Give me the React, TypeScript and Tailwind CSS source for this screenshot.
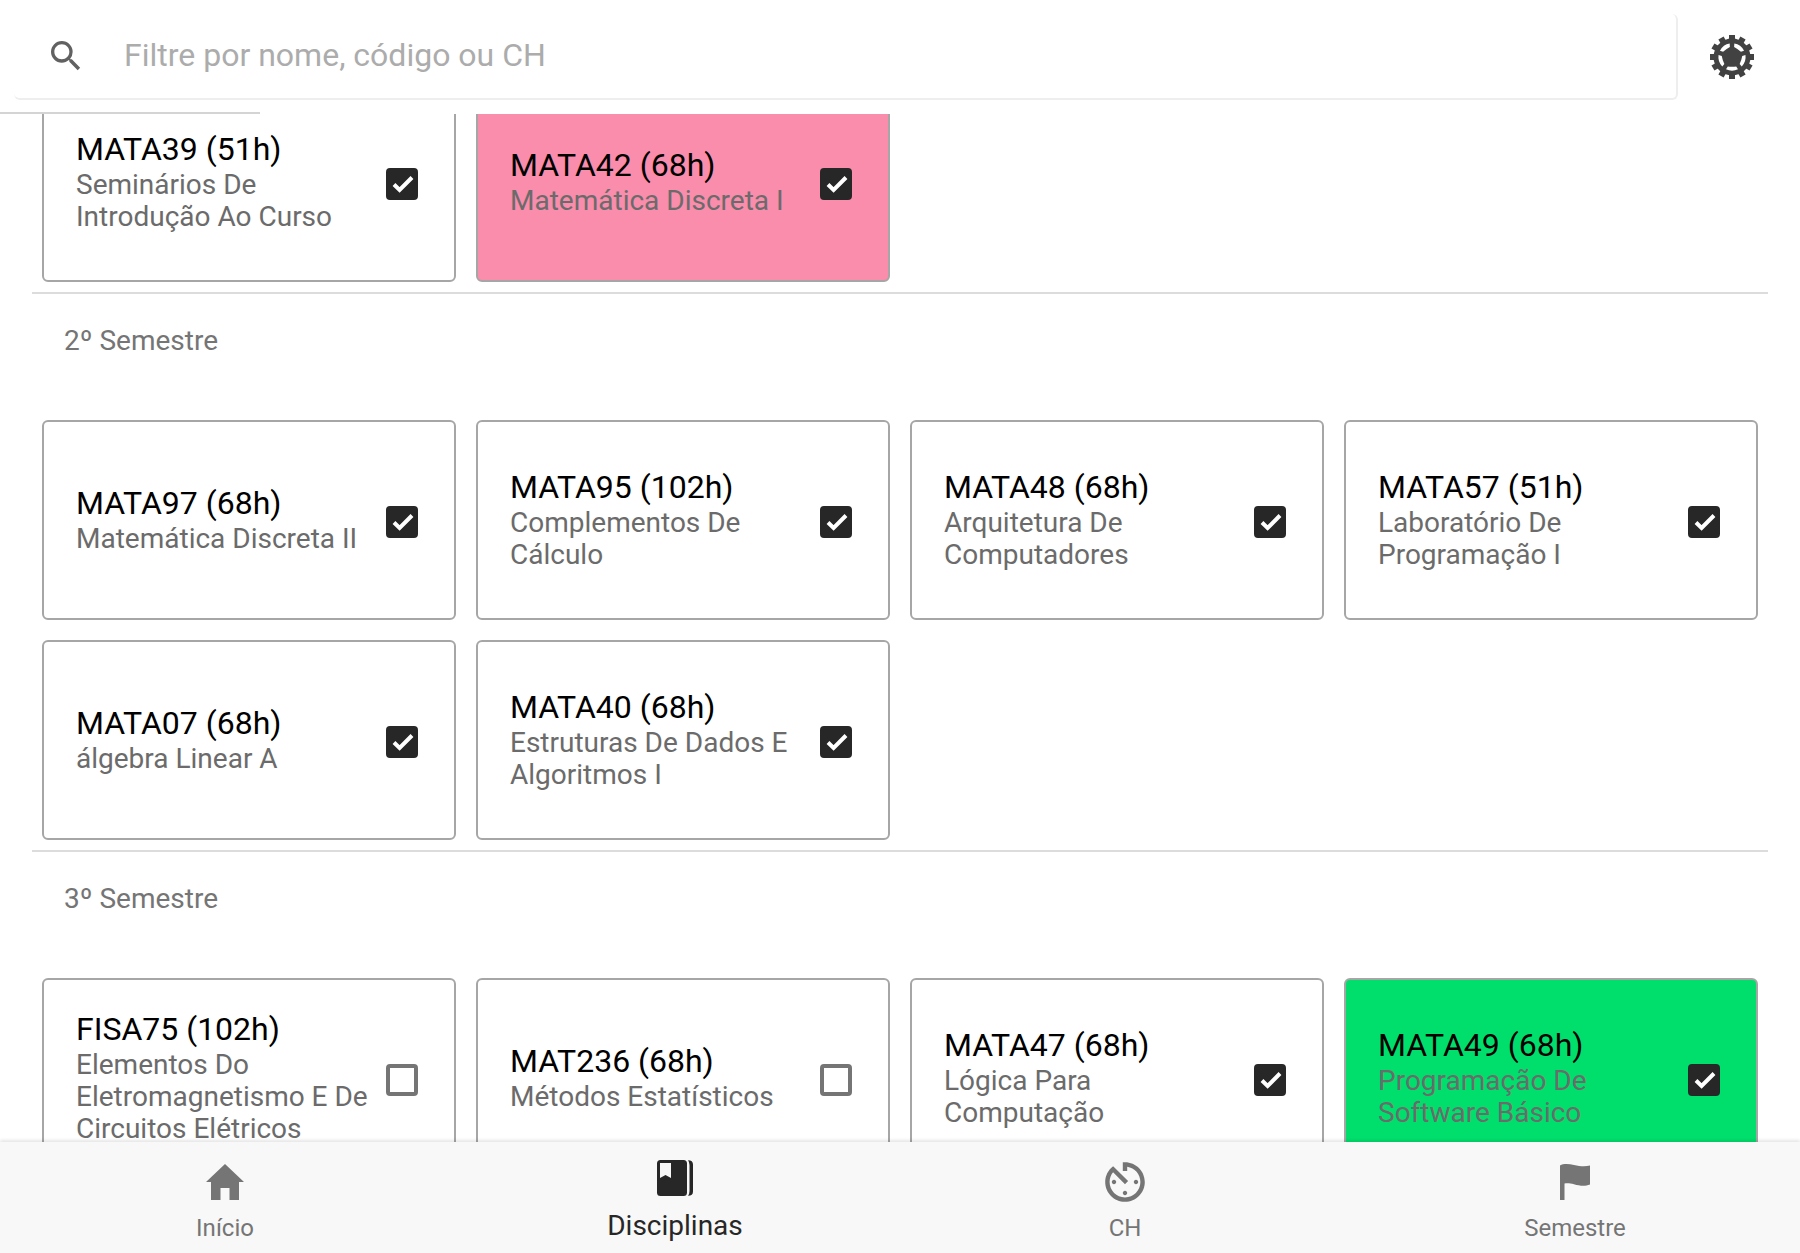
import { MdSearch } from "react-icons/md";

type Course = { code: string; name: string; done: boolean; tone?: "pink" | "green" };

const first: Course[] = [
  { code: "MATA39 (51h)", name: "Seminários De Introdução Ao Curso", done: true },
  { code: "MATA42 (68h)", name: "Matemática Discreta I", done: true, tone: "pink" },
];
const second: Course[] = [
  { code: "MATA97 (68h)", name: "Matemática Discreta II", done: true },
  { code: "MATA95 (102h)", name: "Complementos De Cálculo", done: true },
  { code: "MATA48 (68h)", name: "Arquitetura De Computadores", done: true },
  { code: "MATA57 (51h)", name: "Laboratório De Programação I", done: true },
  { code: "MATA07 (68h)", name: "álgebra Linear A", done: true },
  { code: "MATA40 (68h)", name: "Estruturas De Dados E Algoritmos I", done: true },
];
const third: Course[] = [
  { code: "FISA75 (102h)", name: "Elementos Do Eletromagnetismo E De Circuitos Elétricos", done: false },
  { code: "MAT236 (68h)", name: "Métodos Estatísticos", done: false },
  { code: "MATA47 (68h)", name: "Lógica Para Computação", done: true },
  { code: "MATA49 (68h)", name: "Programação De Software Básico", done: true, tone: "green" },
];

const tones = { pink: "bg-[#fa8cac]", green: "bg-[#00df6c]", none: "bg-white" };

function CourseCard({ course }: { course: Course }) {
  return (
    <label
      className={`flex h-[200px] items-center rounded-md border-2 border-[#a6a6a6] pt-1 pr-9 pl-8 ${tones[course.tone ?? "none"]}`}
    >
      <span className="min-w-0 flex-1 pb-1.5">
        <span className="mb-px block text-[32px] leading-[38px] text-black">{course.code}</span>
        <span className="block text-[28px] leading-8 text-[#6b6b6b]">{course.name}</span>
      </span>
      <span className="relative ml-4 size-8 shrink-0">
        <input
          type="checkbox"
          defaultChecked={course.done}
          className="peer block size-8 appearance-none rounded border-4 border-[#757575] checked:border-[#272727] checked:bg-[#272727]"
        />
        <svg
          viewBox="0 0 32 32"
          className="pointer-events-none absolute inset-0 hidden size-8 peer-checked:block"
          fill="none"
          stroke="#fff"
          strokeWidth="4"
          aria-hidden="true"
        >
          <path d="M8 16.500l5.600 5.500L26 9.500" />
        </svg>
      </span>
    </label>
  );
}

function Semester({ title, courses }: { title?: string; courses: Course[] }) {
  return (
    <section className="mx-8 border-b-2 border-[#dcdcdc] px-2.5 pb-2.5">
      {title && <h2 className="h-[126px] px-[22px] pt-[31px] text-[28px] leading-8 text-[#757575]">{title}</h2>}
      <div className="grid grid-cols-4 gap-5">
        {courses.map((c) => (
          <CourseCard key={c.code} course={c} />
        ))}
      </div>
    </section>
  );
}

function GearIcon() {
  return (
    <svg viewBox="-22 -22 44 44" className="size-11" aria-hidden="true">
      {Array.from({ length: 12 }, (_, i) => (
        <rect key={i} x="-3" y="-22" width="6" height="6" fill="#424242" transform={`rotate(${i * 30})`} />
      ))}
      <circle r="18.5" fill="#424242" />
      {Array.from({ length: 5 }, (_, i) => (
        <path
          key={i}
          fill="#fff"
          d="M-6 12.200A13.600 13.600 0 0 0 6 12.200L4.200 9.400Q0 10 -4.200 9.400Z"
          transform={`rotate(${i * 72})`}
        />
      ))}
    </svg>
  );
}

function HomeIcon() {
  return (
    <svg viewBox="0 0 48 48" className="size-12" fill="currentColor" aria-hidden="true">
      <path d="M24 6L5 24H10V42H19.500V30H28.500V42H38V24H43Z" />
    </svg>
  );
}

function TimerIcon() {
  return (
    <svg viewBox="1.090 1.090 21.820 21.820" className="size-12" fill="currentColor" aria-hidden="true">
      <path d="M11 17c0 .55.45 1 1 1s1-.45 1-1-.45-1-1-1-1 .45-1 1zm0-14v4h2V5.080c3.390.49 6 3.390 6 6.920 0 3.870-3.130 7-7 7s-7-3.130-7-7c0-1.680.59-3.220 1.580-4.420L12 13l1.410-1.410-6.800-6.800v.02C4.420 6.450 3 9.050 3 12c0 4.970 4.020 9 9 9 4.970 0 9-4.030 9-9s-4.030-9-9-9h-1zm7 9c0-.55-.45-1-1-1s-1 .45-1 1 .45 1 1 1 1-.45 1-1zM6 12c0 .55.45 1 1 1s1-.45 1-1-.45-1-1-1-1 .45-1 1z" />
    </svg>
  );
}

function FlagIcon() {
  return (
    <svg viewBox="0 0 48 48" className="size-12" fill="currentColor" aria-hidden="true">
      <path d="M9 7.500C12 5.800 17 5.600 23 7C29 8.300 34 8.900 39 7.500V26.500C34 28.600 29 28 23 26.300C19 25.100 16 24.900 13.500 25.500V42H9Z" />
    </svg>
  );
}

function BookIcon() {
  return (
    <svg viewBox="0 0 36 36" className="size-9" aria-hidden="true">
      <path
        fill="#272727"
        fillRule="evenodd"
        d="M3.500 0H26.500a3.500 3.500 0 0 1 3.500 3.500V32.500a3.500 3.500 0 0 1-3.500 3.500H3.500a3.500 3.500 0 0 1-3.500-3.500V3.500A3.500 3.500 0 0 1 3.500 0ZM3 3V18L8.500 15L14 18V3Z"
      />
      <path fill="#272727" d="M31 0.200Q36 0.200 36 4.500V31.500Q36 35.800 31 35.800Q32.500 34 32.500 31V5Q32.500 2 31 0.200Z" />
    </svg>
  );
}

export default function App() {
  return (
    <div className="flex h-screen flex-col overflow-hidden bg-white font-['Roboto',sans-serif] text-[#757575]">
      <header className="relative flex h-[114px] shrink-0 items-start pt-3.5 pl-3.5">
        <label className="flex h-[86px] flex-1 items-center gap-[38px] rounded-md border-r-2 border-b-2 border-[#eeeeee] pl-8">
          <MdSearch className="size-10 shrink-0 text-[#616161]" aria-hidden="true" />
          <input
            type="text"
            aria-label="Filtrar disciplinas"
            placeholder="Filtre por nome, código ou CH"
            className="w-full bg-transparent pb-0.5 text-[32px] leading-10 text-black outline-none placeholder:text-[#acacac]"
          />
        </label>
        <button type="button" aria-label="Configurações" className="flex h-[86px] w-[122px] items-center justify-center pr-3.5">
          <GearIcon />
        </button>
        <span className="absolute bottom-0 left-0 h-0.5 w-[260px] bg-[#d4d4d4]" />
      </header>
      <main className="min-h-0 flex-1 overflow-hidden">
        <div className="-mt-8">
          <Semester courses={first} />
          <Semester title="2º Semestre" courses={second} />
          <Semester title="3º Semestre" courses={third} />
        </div>
      </main>
      <nav className="relative grid h-[111px] shrink-0 grid-cols-4 bg-[#f8f8f8] text-2xl leading-7 shadow-[0_-2px_3px_rgba(0,0,0,0.1)]">
        <a href="#inicio" className="flex flex-col items-center pt-4">
          <HomeIcon />
          <span className="mt-2">Início</span>
        </a>
        <a href="#disciplinas" className="flex flex-col items-center pt-[18px] text-[28px] leading-8 text-[#272727]">
          <BookIcon />
          <span className="mt-3.5">Disciplinas</span>
        </a>
        <a href="#ch" className="flex flex-col items-center pt-4">
          <TimerIcon />
          <span className="mt-2">CH</span>
        </a>
        <a href="#semestre" className="flex flex-col items-center pt-4">
          <FlagIcon />
          <span className="mt-2">Semestre</span>
        </a>
      </nav>
    </div>
  );
}
